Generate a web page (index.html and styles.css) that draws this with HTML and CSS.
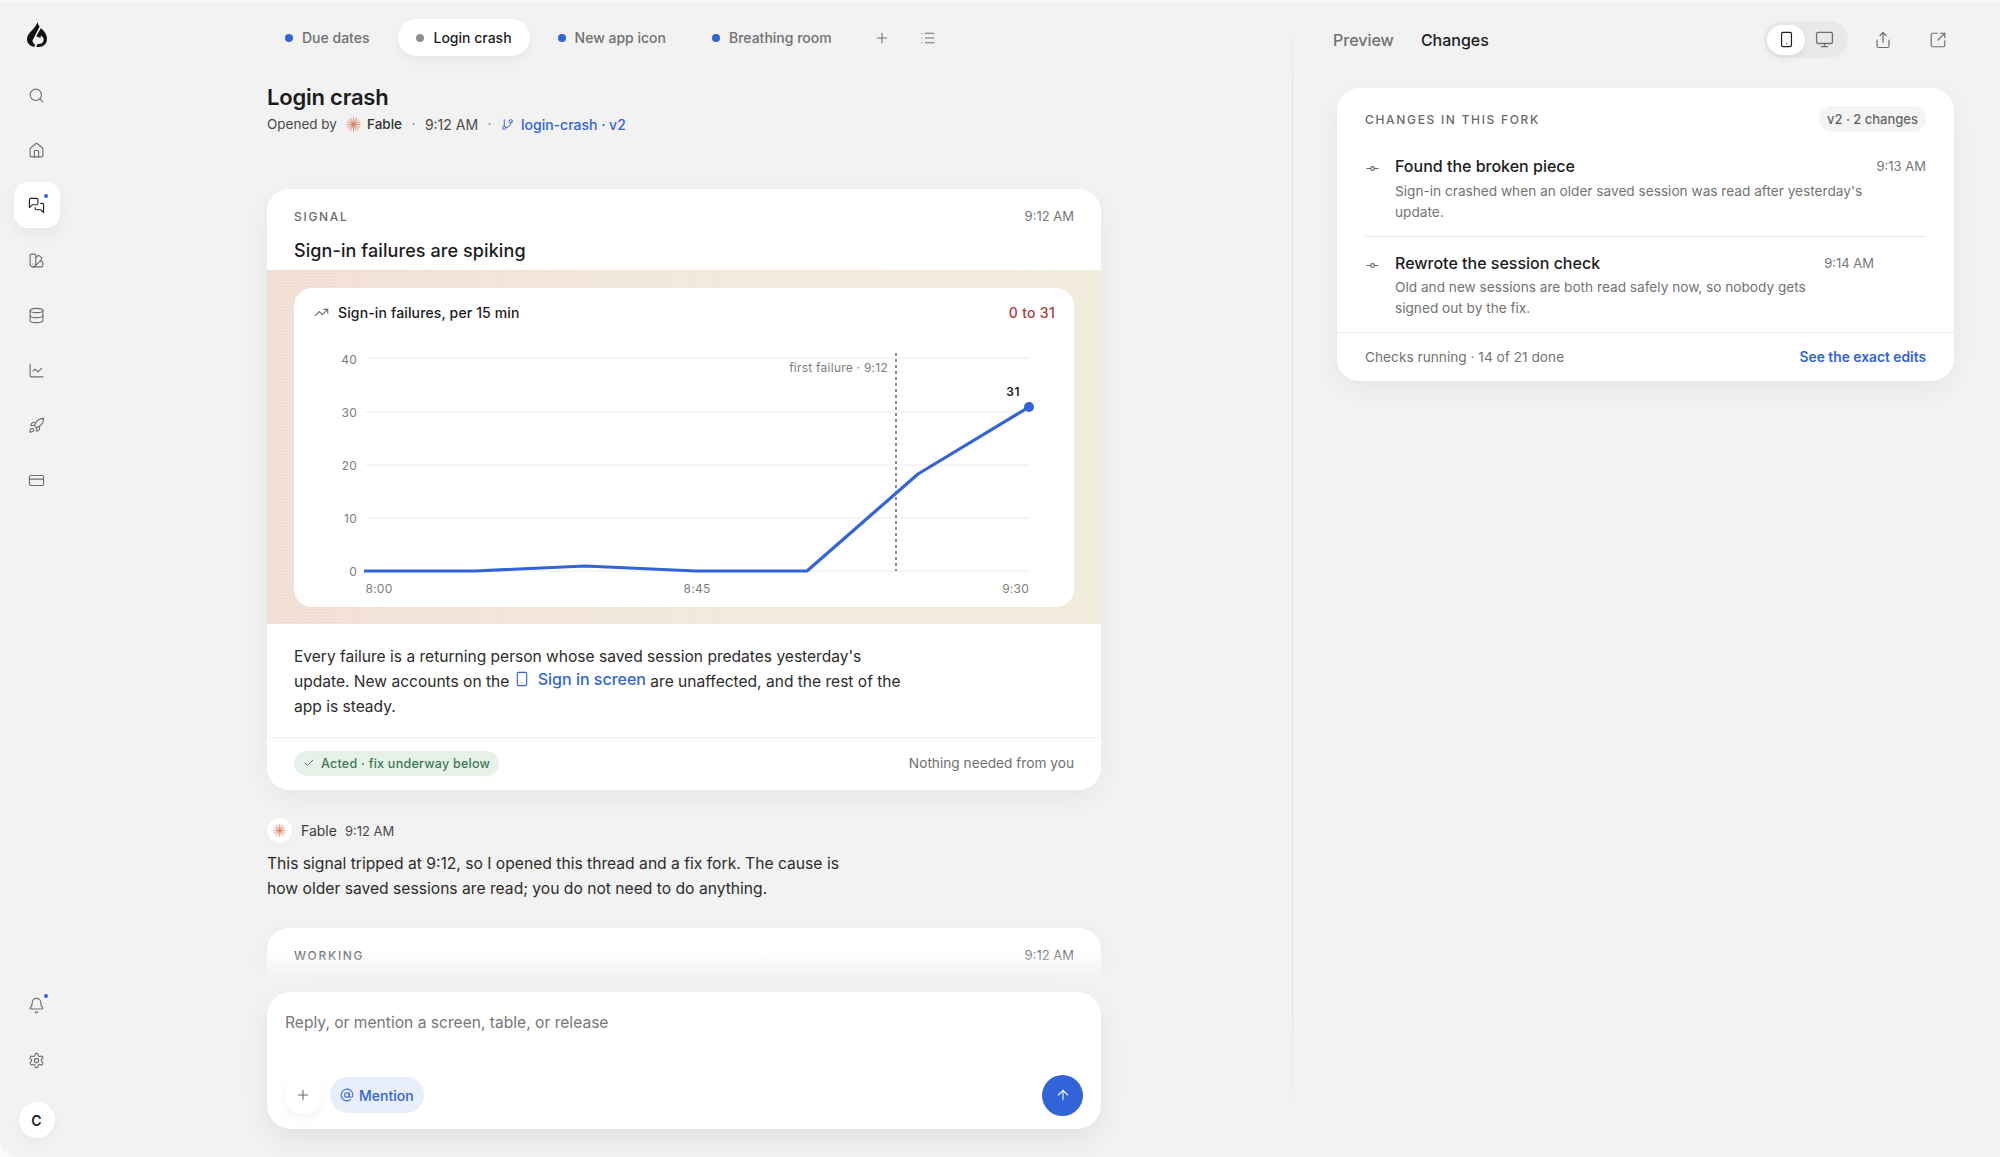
FILE: index.html
```html
<!DOCTYPE html>
<html lang="en">
<head>
<meta charset="utf-8">
<title>Login crash</title>
<link rel="stylesheet" href="styles.css">
</head>
<body>
<svg class="defs" aria-hidden="true">
  <symbol id="i-search" viewBox="0 0 24 24"><circle cx="11" cy="11" r="8"/><path d="m21 21-4.3-4.3"/></symbol>
  <symbol id="i-home" viewBox="0 0 24 24"><path d="M15 21v-8a1 1 0 0 0-1-1h-4a1 1 0 0 0-1 1v8"/><path d="M3 10a2 2 0 0 1 .709-1.528l7-5.999a2 2 0 0 1 2.582 0l7 5.999A2 2 0 0 1 21 10v9a2 2 0 0 1-2 2H5a2 2 0 0 1-2-2z"/></symbol>
  <symbol id="i-chat" viewBox="0 0 24 24"><path d="M14 9a2 2 0 0 1-2 2H6l-4 4V4a2 2 0 0 1 2-2h8a2 2 0 0 1 2 2z"/><path d="M18 9h2a2 2 0 0 1 2 2v11l-4-4h-6a2 2 0 0 1-2-2v-1"/></symbol>
  <symbol id="i-swatch" viewBox="0 0 24 24"><path d="M11 17a4 4 0 0 1-8 0V5a2 2 0 0 1 2-2h4a2 2 0 0 1 2 2Z"/><path d="M16.7 13H19a2 2 0 0 1 2 2v4a2 2 0 0 1-2 2H7"/><path d="M7 17h.01"/><path d="m11 8 2.3-2.3a2.4 2.4 0 0 1 3.404.004L18.6 7.6a2.4 2.4 0 0 1 .026 3.434L9.9 19.8"/></symbol>
  <symbol id="i-db" viewBox="0 0 24 24"><ellipse cx="12" cy="5" rx="9" ry="3"/><path d="M3 5V19A9 3 0 0 0 21 19V5"/><path d="M3 12A9 3 0 0 0 21 12"/></symbol>
  <symbol id="i-chart" viewBox="0 0 24 24"><path d="M3 3v16a2 2 0 0 0 2 2h16"/><path d="m19 9-5 5-4-4-3 3"/></symbol>
  <symbol id="i-rocket" viewBox="0 0 24 24"><path d="M4.5 16.5c-1.5 1.26-2 5-2 5s3.74-.5 5-2c.71-.84.7-2.13-.09-2.91a2.18 2.18 0 0 0-2.91-.09z"/><path d="m12 15-3-3a22 22 0 0 1 2-3.95A12.88 12.88 0 0 1 22 2c0 2.72-.78 7.5-6 11a22.35 22.35 0 0 1-4 2z"/><path d="M9 12H4s.55-3.03 2-4c1.62-1.08 5 0 5 0"/><path d="M12 15v5s3.03-.55 4-2c1.08-1.62 0-5 0-5"/></symbol>
  <symbol id="i-card" viewBox="0 0 24 24"><rect width="20" height="14" x="2" y="5" rx="2"/><path d="M2 10h20"/></symbol>
  <symbol id="i-bell" viewBox="0 0 24 24"><path d="M10.268 21a2 2 0 0 0 3.464 0"/><path d="M3.262 15.326A1 1 0 0 0 4 17h16a1 1 0 0 0 .74-1.673C19.41 13.956 18 12.499 18 8A6 6 0 0 0 6 8c0 4.499-1.411 5.956-2.738 7.326"/></symbol>
  <symbol id="i-gear" viewBox="0 0 24 24"><path d="M12.22 2h-.44a2 2 0 0 0-2 2v.18a2 2 0 0 1-1 1.73l-.43.25a2 2 0 0 1-2 0l-.15-.08a2 2 0 0 0-2.73.73l-.22.38a2 2 0 0 0 .73 2.73l.15.1a2 2 0 0 1 1 1.72v.51a2 2 0 0 1-1 1.74l-.15.09a2 2 0 0 0-.73 2.73l.22.38a2 2 0 0 0 2.73.73l.15-.08a2 2 0 0 1 2 0l.43.25a2 2 0 0 1 1 1.73V20a2 2 0 0 0 2 2h.44a2 2 0 0 0 2-2v-.18a2 2 0 0 1 1-1.73l.43-.25a2 2 0 0 1 2 0l.15.08a2 2 0 0 0 2.73-.73l.22-.39a2 2 0 0 0-.73-2.73l-.15-.08a2 2 0 0 1-1-1.74v-.5a2 2 0 0 1 1-1.74l.15-.09a2 2 0 0 0 .73-2.73l-.22-.38a2 2 0 0 0-2.73-.73l-.15.08a2 2 0 0 1-2 0l-.43-.25a2 2 0 0 1-1-1.73V4a2 2 0 0 0-2-2z"/><circle cx="12" cy="12" r="3"/></symbol>
  <symbol id="i-trend" viewBox="0 0 24 24"><path d="M16 7h6v6"/><path d="m22 7-8.5 8.5-5-5L2 17"/></symbol>
  <symbol id="i-branch" viewBox="0 0 24 24"><path d="M6 3v12"/><circle cx="18" cy="6" r="3"/><circle cx="6" cy="18" r="3"/><path d="M18 9a9 9 0 0 1-9 9"/></symbol>
  <symbol id="i-commit" viewBox="0 0 24 24"><circle cx="12" cy="12" r="3"/><path d="M3 12h6M15 12h6"/></symbol>
  <symbol id="i-phone" viewBox="0 0 24 24"><rect width="14" height="20" x="5" y="2" rx="2"/><path d="M12 18h.01"/></symbol>
  <symbol id="i-monitor" viewBox="0 0 24 24"><rect width="20" height="14" x="2" y="3" rx="2"/><path d="M8 21h8M12 17v4"/></symbol>
  <symbol id="i-share" viewBox="0 0 24 24"><path d="M12 2v13"/><path d="m16 6-4-4-4 4"/><path d="M4 12v8a2 2 0 0 0 2 2h12a2 2 0 0 0 2-2v-8"/></symbol>
  <symbol id="i-external" viewBox="0 0 24 24"><path d="M21 13v6a2 2 0 0 1-2 2H5a2 2 0 0 1-2-2V5a2 2 0 0 1 2-2h6"/><path d="m21 3-9 9"/><path d="M15 3h6v6"/></symbol>
  <symbol id="i-plus" viewBox="0 0 24 24"><path d="M5 12h14M12 5v14"/></symbol>
  <symbol id="i-list" viewBox="0 0 24 24"><path d="M3 5h.01M3 12h.01M3 19h.01M8 5h13M8 12h13M8 19h13"/></symbol>
  <symbol id="i-check" viewBox="0 0 24 24"><path d="M20 6 9 17l-5-5"/></symbol>
  <symbol id="i-at" viewBox="0 0 24 24"><circle cx="12" cy="12" r="4"/><path d="M16 8v5a3 3 0 0 0 6 0v-1a10 10 0 1 0-4 8"/></symbol>
  <symbol id="i-up" viewBox="0 0 24 24"><path d="m5 12 7-7 7 7"/><path d="M12 19V5"/></symbol>
  <symbol id="i-burst" viewBox="0 0 24 24"><path d="M12 1v22M1 12h22M4.200 4.200l15.600 15.600M19.800 4.200 4.200 19.800M7.500 2l9 20M16.500 2l-9 20M2 7.500l20 9M2 16.500l20-9"/></symbol>
</svg>

<div class="shell">
  <aside class="rail">
    <svg class="logo" viewBox="0 0 20 25" aria-hidden="true"><path d="M10.500 0C10.800 1.800 11.500 3.200 12.600 4.600L5.400 18.800C5.800 20.500 6.800 21.800 8.200 22.700L7.200 25C3 24.300 0 21.200 0 17.300 0 13.700 2.200 11.500 4.800 8.600 7 6.200 9.300 3.400 10.500 0Z"/><path d="M13.800 6.300C17.400 9.200 20 12.700 20 17 20 21.800 16.300 25 11.500 25 10.700 25 10 24.900 9.400 24.700L10.500 21.900C13.800 22.600 16.600 20.700 16.600 17.700 16.600 15.800 15.500 14.300 13.800 13.500L13.600 16 9.300 14.200Z"/></svg>
    <nav class="rail-nav">
      <a class="rail-btn"><svg class="ico"><use href="#i-search"/></svg></a>
      <a class="rail-btn"><svg class="ico"><use href="#i-home"/></svg></a>
      <a class="rail-btn is-active"><svg class="ico"><use href="#i-chat"/></svg><span class="pip"></span></a>
      <a class="rail-btn"><svg class="ico"><use href="#i-swatch"/></svg></a>
      <a class="rail-btn"><svg class="ico"><use href="#i-db"/></svg></a>
      <a class="rail-btn"><svg class="ico"><use href="#i-chart"/></svg></a>
      <a class="rail-btn"><svg class="ico"><use href="#i-rocket"/></svg></a>
      <a class="rail-btn"><svg class="ico"><use href="#i-card"/></svg></a>
    </nav>
    <div class="rail-foot">
      <a class="rail-btn"><svg class="ico"><use href="#i-bell"/></svg><span class="pip"></span></a>
      <a class="rail-btn"><svg class="ico"><use href="#i-gear"/></svg></a>
      <div class="me">C</div>
    </div>
  </aside>

  <main class="center">
    <div class="tabs">
      <a class="tab tab-first"><span class="dot"></span>Due dates</a>
      <a class="tab is-active"><span class="dot"></span>Login crash</a>
      <a class="tab"><span class="dot"></span>New app icon</a>
      <a class="tab"><span class="dot"></span>Breathing room</a>
      <a class="tab-icon tab-plus"><svg class="ico"><use href="#i-plus"/></svg></a>
      <a class="tab-icon"><svg class="ico"><use href="#i-list"/></svg></a>
    </div>

    <div class="thread">
      <h1 class="title">Login crash</h1>
      <div class="meta">
        <span>Opened by</span>
        <svg class="burst"><use href="#i-burst"/></svg>
        <strong class="meta-name">Fable</strong>
        <span class="sep">·</span>
        <span class="meta-time">9:12 AM</span>
        <span class="sep">·</span>
        <a class="meta-link"><svg class="ico-s"><use href="#i-branch"/></svg>login-crash · v2</a>
      </div>

      <article class="card signal">
        <header class="card-head">
          <span class="eyebrow">SIGNAL</span>
          <time class="stamp">9:12 AM</time>
        </header>
        <h2 class="signal-title">Sign-in failures are spiking</h2>
        <div class="band">
          <div class="chart-card">
            <div class="chart-head">
              <svg class="ico-trend"><use href="#i-trend"/></svg>
              <span class="chart-name">Sign-in failures, per 15 min</span>
              <span class="chart-delta">0 to 31</span>
            </div>
            <svg class="chart" viewBox="0 0 780 283" aria-label="Sign-in failures line chart">
              <g class="grid">
                <line x1="72" x2="735" y1="34" y2="34"/>
                <line x1="72" x2="735" y1="88" y2="88"/>
                <line x1="72" x2="735" y1="141" y2="141"/>
                <line x1="72" x2="735" y1="194" y2="194"/>
                <line x1="72" x2="735" y1="247" y2="247"/>
              </g>
              <g class="ax">
                <text x="63" y="40" text-anchor="end">40</text>
                <text x="63" y="93" text-anchor="end">30</text>
                <text x="63" y="146" text-anchor="end">20</text>
                <text x="63" y="199" text-anchor="end">10</text>
                <text x="63" y="252" text-anchor="end">0</text>
                <text x="85" y="269" text-anchor="middle">8:00</text>
                <text x="403" y="269" text-anchor="middle">8:45</text>
                <text x="735" y="269" text-anchor="end">9:30</text>
                <text x="594" y="48" text-anchor="end">first failure · 9:12</text>
              </g>
              <line class="mark" x1="602" x2="602" y1="29" y2="247"/>
              <polyline class="series" points="70,247 181,247 291,242 402,247 513,247 624,150 735,83"/>
              <circle class="end" cx="735" cy="83" r="5"/>
              <text class="end-label" x="726" y="72" text-anchor="end">31</text>
            </svg>
          </div>
        </div>
        <p class="signal-body">Every failure is a returning person whose saved session predates yesterday's update. New accounts on the <a class="ref"><svg class="ico-ref"><use href="#i-phone"/></svg>Sign in screen</a> are unaffected, and the rest of the app is steady.</p>
        <footer class="signal-foot">
          <span class="acted"><svg class="ico-check"><use href="#i-check"/></svg>Acted · fix underway below</span>
          <span class="nothing">Nothing needed from you</span>
        </footer>
      </article>

      <div class="msg-head">
        <span class="avatar"><svg class="burst"><use href="#i-burst"/></svg></span>
        <span class="msg-name">Fable</span>
        <time class="msg-time">9:12 AM</time>
      </div>
      <p class="msg">This signal tripped at 9:12, so I opened this thread and a fix fork. The cause is how older saved sessions are read; you do not need to do anything.</p>

      <article class="card working">
        <header class="card-head">
          <span class="eyebrow">WORKING</span>
          <time class="stamp">9:12 AM</time>
        </header>
      </article>
      <div class="fade"></div>
    </div>

    <form class="composer">
      <div class="placeholder">Reply, or mention a screen, table, or release</div>
      <div class="composer-row">
        <button class="add" type="button"><svg class="ico"><use href="#i-plus"/></svg></button>
        <button class="mention" type="button"><svg class="ico-at"><use href="#i-at"/></svg>Mention</button>
        <button class="send" type="button"><svg class="ico"><use href="#i-up"/></svg></button>
      </div>
    </form>
  </main>

  <section class="side">
    <div class="side-top">
      <a class="side-tab">Preview</a>
      <a class="side-tab is-active">Changes</a>
      <div class="device">
        <a class="device-btn is-active"><svg class="ico"><use href="#i-phone"/></svg></a>
        <a class="device-btn"><svg class="ico ico-monitor"><use href="#i-monitor"/></svg></a>
      </div>
      <a class="side-icon"><svg class="ico"><use href="#i-share"/></svg></a>
      <a class="side-icon"><svg class="ico"><use href="#i-external"/></svg></a>
    </div>

    <div class="card changes">
      <div class="changes-head">
        <span class="eyebrow">CHANGES IN THIS FORK</span>
        <span class="badge">v2 · 2 changes</span>
      </div>
      <div class="change first">
        <svg class="ico-commit"><use href="#i-commit"/></svg>
        <div class="change-body">
          <div class="change-top"><strong class="change-title">Found the broken piece</strong><time class="stamp">9:13 AM</time></div>
          <p class="change-text">Sign-in crashed when an older saved session was read after yesterday's update.</p>
        </div>
      </div>
      <div class="change second">
        <svg class="ico-commit"><use href="#i-commit"/></svg>
        <div class="change-body">
          <div class="change-top"><strong class="change-title">Rewrote the session check</strong><time class="stamp">9:14 AM</time></div>
          <p class="change-text">Old and new sessions are both read safely now, so nobody gets signed out by the fix.</p>
        </div>
      </div>
      <div class="changes-foot">
        <span class="checks">Checks running · 14 of 21 done</span>
        <a class="edits">See the exact edits</a>
      </div>
    </div>
  </section>
</div>
</body>
</html>
```

FILE: styles.css
```css
* { box-sizing: border-box; }
html, body { margin: 0; height: 100%; }
body {
  background: #fafafa;
  font-family: Inter, "Liberation Sans", sans-serif;
  color: #1c1c1e;
  overflow: hidden;
}
a { color: inherit; text-decoration: none; }
p, h1, h2 { margin: 0; }
.defs { display: none; }

.ico, .ico-s, .ico-trend, .ico-ref, .ico-check, .ico-at, .ico-commit, .burst {
  fill: none;
  stroke: currentColor;
  stroke-width: 2;
  stroke-linecap: round;
  stroke-linejoin: round;
  flex: none;
  display: block;
}
.ico { width: 16px; height: 16px; }

.shell {
  display: grid;
  grid-template-columns: 72px 1220px 708px;
  height: 1157px;
  border-top: 2px solid #f8f8f8;
  background: #f2f2f2;
  border-bottom-left-radius: 18px;
  overflow: hidden;
}

/* rail */
.rail {
  display: flex;
  flex-direction: column;
  align-items: center;
  padding: 20px 0 19px 1px;
}
.logo { width: 20px; height: 25px; fill: #111; margin-bottom: 25px; }
.rail-nav, .rail-foot { display: flex; flex-direction: column; align-items: center; gap: 9px; }
.rail-foot { margin-top: auto; }
.rail-btn {
  position: relative;
  width: 46px;
  height: 46px;
  border-radius: 14px;
  display: flex;
  align-items: center;
  justify-content: center;
  color: #6e6e6e;
}
.rail-btn .ico { stroke-width: 1.6; width: 17px; height: 17px; }
.rail-btn.is-active {
  background: #fff;
  color: #222;
  box-shadow: 0 6px 16px rgba(0, 0, 0, .05);
}
.pip {
  position: absolute;
  top: 12px;
  right: 12px;
  width: 4px;
  height: 4px;
  border-radius: 50%;
  background: #3263d8;
}
.me {
  width: 36px;
  height: 36px;
  margin-top: 10px;
  border-radius: 50%;
  background: #fff;
  display: flex;
  align-items: center;
  justify-content: center;
  font-size: 14px;
  font-weight: 600;
  box-shadow: 0 4px 12px rgba(0, 0, 0, .04);
}

/* center */
.center {
  display: flex;
  flex-direction: column;
  padding: 17px 0 28px;
  min-height: 0;
}
.tabs {
  display: flex;
  align-items: center;
  gap: 10px;
  padding-left: 195px;
  height: 37px;
  flex: none;
}
.tab {
  display: flex;
  align-items: center;
  gap: 9px;
  height: 37px;
  padding: 0 18px;
  border-radius: 19px;
  font-size: 14px;
  font-weight: 500;
  color: #707070;
}
.tab-first { padding-right: 19px; }
.tab .dot { width: 8px; height: 8px; border-radius: 50%; background: #3263d8; }
.tab.is-active {
  background: #fff;
  color: #1c1c1e;
  box-shadow: 0 4px 12px rgba(0, 0, 0, .05);
}
.tab.is-active .dot { background: #8f8f8f; }
.tab-icon { width: 36px; height: 36px; display: flex; align-items: center; justify-content: center; color: #707070; }
.tab-plus { margin-left: 4px; }
.tab-icon .ico { stroke-width: 1.6; }

.thread {
  position: relative;
  flex: 1;
  min-height: 0;
  overflow: hidden;
  padding: 27px 191px 0 195px;
}
.title { font-size: 22px; line-height: 28px; font-weight: 600; letter-spacing: -.01em; }
.meta {
  display: flex;
  align-items: center;
  height: 20px;
  margin-top: 3px;
  font-size: 13.500px;
  color: #4a4a4a;
  white-space: nowrap;
}
.meta .burst { width: 15px; height: 15px; margin: 0 6px 0 9px; color: #d97b5c; stroke-width: 1.200; }
.meta-name { font-weight: 500; color: #333; }
.meta-time { font-size: 14px; }
.sep { margin: 0 9.500px; color: #888; }
.meta-link { display: flex; align-items: center; gap: 7px; color: #3263d8; font-weight: 500; font-size: 14px; }
.ico-s { width: 13px; height: 13px; stroke-width: 1.800; }

.card {
  background: #fff;
  border-radius: 22px;
  box-shadow: 0 8px 24px rgba(0, 0, 0, .05);
}
.signal { margin-top: 55px; height: 601px; overflow: hidden; }
.card-head {
  display: flex;
  justify-content: space-between;
  align-items: center;
  padding: 19px 27px 0;
  height: 35px;
}
.eyebrow { font-size: 12px; font-weight: 500; letter-spacing: .14em; color: #6a6a6a; }
.stamp { font-size: 13px; color: #777; white-space: nowrap; }
.signal-title { font-size: 18px; font-weight: 500; line-height: 26px; margin: 14px 27px 6px; letter-spacing: .005em; }
.band {
  padding: 18px 27px 17px;
  background:
    repeating-linear-gradient(90deg, rgba(255,255,255,.16) 0 1px, transparent 1px 3px),
    repeating-linear-gradient(0deg, rgba(255,255,255,.16) 0 1px, transparent 1px 3px),
    linear-gradient(90deg, #f1dccf, #f1e6d6 45%, #f0ead9);
}
.chart-card { background: #fff; border-radius: 18px; height: 319px; }
.chart-head {
  display: flex;
  align-items: center;
  height: 36px;
  padding: 12px 19px 0 20px;
}
.ico-trend { width: 15px; height: 15px; color: #666; stroke-width: 1.700; margin-right: 9px; }
.chart-name { font-size: 14px; font-weight: 500; letter-spacing: .01em; }
.chart-delta { margin-left: auto; font-size: 14px; font-weight: 500; color: #b53a3a; letter-spacing: .02em; }
.chart { display: block; width: 780px; height: 283px; }
.grid line { stroke: #ececec; stroke-width: 1; }
.ax text { font-size: 12px; fill: #7d7d7d; letter-spacing: .02em; }
.mark { stroke: #666; stroke-width: 1.500; stroke-dasharray: 3 3; }
.series { fill: none; stroke: #3263d8; stroke-width: 3.200; stroke-linejoin: round; }
.end { fill: #3263d8; }
.end-label { font-size: 12px; font-weight: 600; fill: #222; letter-spacing: .04em; }

.signal-body {
  max-width: 674px;
  padding: 20px 27px 0;
  height: 113px;
  font-size: 15.550px;
  line-height: 25.200px;
  color: #2c2c2c;
}
.ref {
  color: #3263d8;
  font-weight: 500;
  font-size: 16px;
  line-height: 16px;
  vertical-align: 2px;
}
.ico-ref {
  display: inline-block;
  width: 16px;
  height: 16px;
  margin-right: 8px;
  vertical-align: -2px;
  stroke-width: 1.700;
}
.signal-foot {
  display: flex;
  align-items: center;
  justify-content: space-between;
  height: 53px;
  padding: 0 27px 2px;
  border-top: 1.500px solid #f0f0f0;
}
.acted {
  display: inline-flex;
  align-items: center;
  gap: 6px;
  height: 25px;
  padding: 0 9px;
  border-radius: 13px;
  background: #e8f0ea;
  color: #3a7a52;
  font-size: 12.500px;
  font-weight: 500;
  letter-spacing: .02em;
}
.ico-check { width: 12px; height: 12px; stroke-width: 1.800; }
.nothing { font-size: 13.700px; color: #6f6f6f; }

.msg-head { display: flex; align-items: center; height: 25px; margin-top: 28px; }
.avatar {
  width: 25px;
  height: 25px;
  border-radius: 50%;
  background: #fff;
  display: flex;
  align-items: center;
  justify-content: center;
  margin-right: 9px;
  box-shadow: 0 2px 6px rgba(0, 0, 0, .03);
}
.avatar .burst { width: 13px; height: 13px; color: #d97b5c; stroke-width: 1.200; }
.msg-name { font-size: 14px; margin-right: 8px; color: #3a3a3a; }
.msg-time { font-size: 13px; color: #4a4a4a; }
.msg { max-width: 600px; margin-top: 8px; font-size: 15.650px; line-height: 25px; color: #2c2c2c; }
.working { margin-top: 27px; height: 120px; }
.fade {
  position: absolute;
  left: 0;
  right: 0;
  bottom: 0;
  height: 28px;
  background: linear-gradient(rgba(242,242,242,0), #f2f2f2);
}

.composer {
  flex: none;
  margin: 14px 191px 0 195px;
  height: 137px;
  padding: 21px 18px 13px;
  background: #fff;
  border-radius: 24px;
  box-shadow: 0 10px 28px rgba(0, 0, 0, .07);
  display: flex;
  flex-direction: column;
  justify-content: space-between;
}
.placeholder { font-size: 15.600px; line-height: 20px; color: #777; }
.composer-row { display: flex; align-items: center; gap: 9px; height: 42px; }
button { font: inherit; border: 0; cursor: pointer; padding: 0; }
.add {
  width: 36px;
  height: 36px;
  border-radius: 14px;
  background: #fff;
  color: #666;
  display: flex;
  align-items: center;
  justify-content: center;
  box-shadow: 0 4px 12px rgba(0, 0, 0, .05);
}
.add .ico { stroke-width: 1.600; }
.mention {
  display: flex;
  align-items: center;
  gap: 5px;
  height: 36px;
  padding: 0 10px;
  border-radius: 18px;
  background: #e9eefb;
  color: #3263d8;
  font-size: 14px;
  font-weight: 500;
}
.ico-at { width: 14px; height: 14px; stroke-width: 1.800; }
.send {
  margin-left: auto;
  width: 41px;
  height: 41px;
  border-radius: 50%;
  background: #3263d8;
  color: #fff;
  display: flex;
  align-items: center;
  justify-content: center;
}
.send .ico { width: 16px; height: 16px; stroke-width: 1.600; }

/* side */
.side {
  padding: 19px 45px 0 40px;
  border-left: 1px solid;
  border-image: linear-gradient(rgba(224,224,224,0) 2%, #e0e0e0 8%, #e0e0e0 86%, rgba(224,224,224,0) 97%) 1;
}
.side-top { display: flex; align-items: center; height: 37px; margin-right: -1px; }
.side-tab { font-size: 16px; font-weight: 500; color: #707070; margin-right: 27px; }
.side-tab.is-active { color: #1c1c1e; }
.device {
  display: flex;
  align-items: center;
  width: 84px;
  height: 37px;
  padding: 0 3px;
  margin: 0 16px 0 auto;
  border-radius: 19px;
  background: #e9e9e9;
}
.device-btn {
  width: 38px;
  height: 30px;
  border-radius: 15px;
  display: flex;
  align-items: center;
  justify-content: center;
  color: #707070;
}
.device-btn.is-active { background: #fff; color: #222; box-shadow: 0 3px 8px rgba(0,0,0,.06); }
.device-btn .ico { stroke-width: 1.700; width: 17px; height: 17px; }
.device-btn .ico-monitor { width: 19px; height: 19px; }
.side-icon { width: 36px; height: 36px; display: flex; align-items: center; justify-content: center; color: #707070; margin-left: 1px; }
.side-icon + .side-icon { margin-left: 19px; }
.side-icon .ico { stroke-width: 1.600; width: 18px; height: 18px; }

.changes { margin: 30px 1px 0 4px; height: 293px; overflow: hidden; }
.changes-head {
  display: flex;
  align-items: center;
  justify-content: space-between;
  margin: 18px 28px 0;
  height: 26px;
}
.badge {
  display: flex;
  align-items: center;
  height: 26px;
  padding: 0 8px;
  border-radius: 13px;
  background: #f4f4f4;
  font-size: 13px;
  font-weight: 500;
  color: #666;
}
.change { display: flex; margin: 0 28px; }
.change.first { padding: 22px 0 13px; border-bottom: 1px solid #e9e9e9; }
.change.first .change-text { margin-top: 3px; }
.change.second { padding: 14px 0 13px; }
.ico-commit { width: 15px; height: 15px; margin: 7px 15px 0 0; color: #666; stroke-width: 1.800; }
.change-body { flex: 1; }
.change-top { display: flex; justify-content: space-between; align-items: center; height: 24px; }
.second .change-top { margin-right: 52px; }
.change-title { font-size: 16px; font-weight: 500; }
.change-text { margin-top: 2px; font-size: 13.650px; line-height: 21px; color: #737373; }
.first .change-text { max-width: 490px; }
.second .change-text { max-width: 440px; }
.changes-foot {
  display: flex;
  align-items: center;
  justify-content: space-between;
  height: 48px;
  padding: 0 28px;
  border-top: 1px solid #ebebeb;
  font-size: 13.700px;
}
.checks { color: #737373; }
.edits { color: #3263d8; font-weight: 600; font-size: 13.800px; }
```
